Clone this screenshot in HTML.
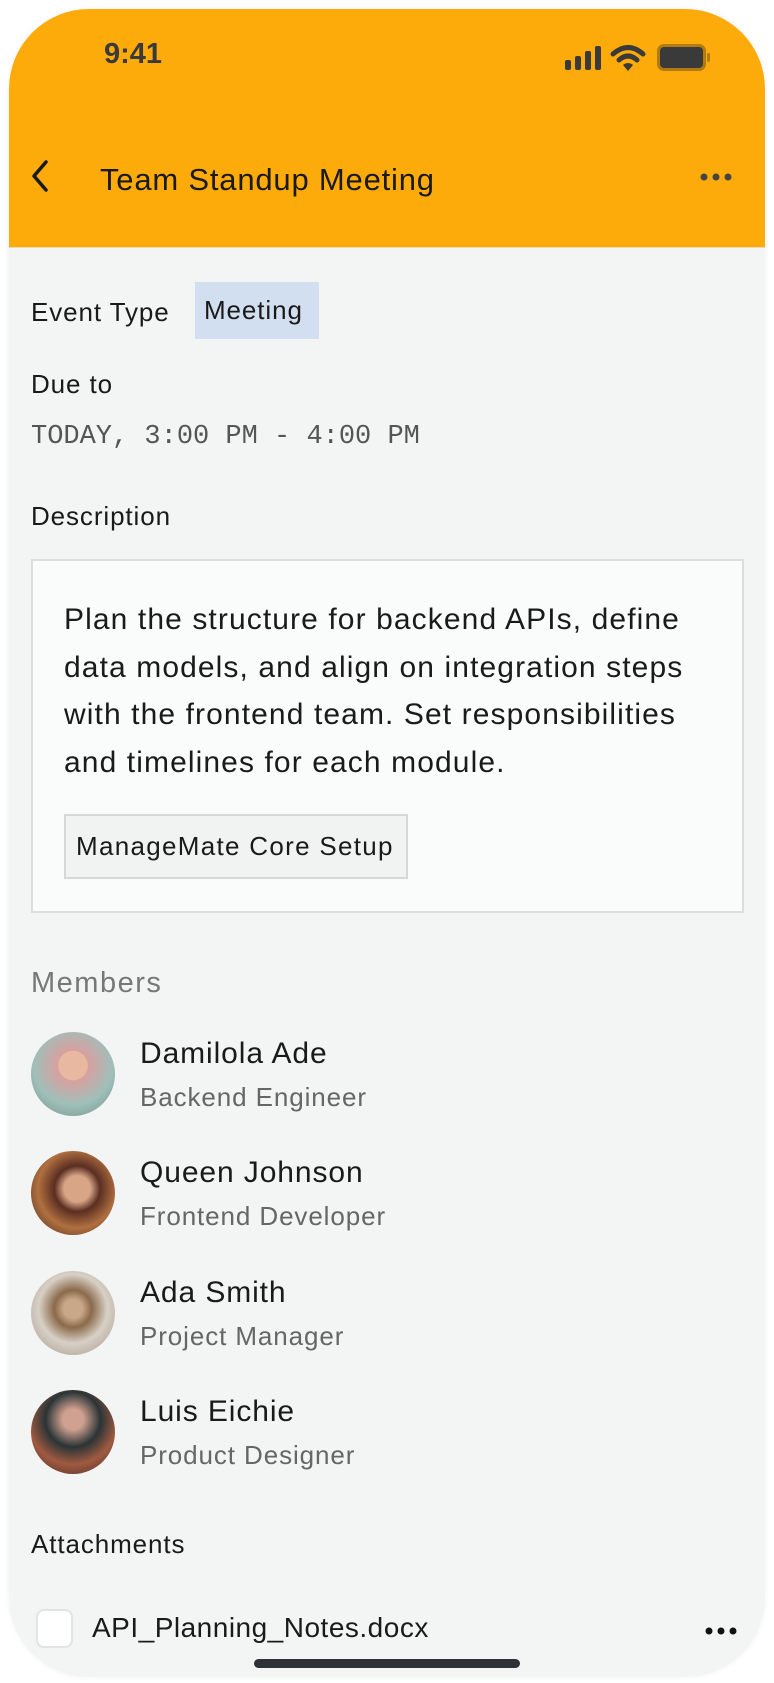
<!DOCTYPE html>
<html><head><meta charset="utf-8"><style>
*{margin:0;padding:0;box-sizing:border-box}
body{width:774px;height:1683px;background:#fff;font-family:"Liberation Sans",sans-serif;position:relative;overflow:hidden;color:#1a1a1a;letter-spacing:0.9px}
.frame{position:absolute;left:9px;top:9px;width:756px;height:1668px;border-radius:80px;background:#f3f4f4;overflow:hidden;box-shadow:0 0 6px rgba(0,0,0,.06)}
.hdr{position:absolute;left:0;top:0;width:756px;height:239px;background:#fdab0b;border-bottom:1px solid #e8d9b8}
.a{position:absolute;white-space:nowrap}
.av{position:absolute;left:22px;width:84px;height:84px;border-radius:50%}
.nm{position:absolute;left:131px;font-size:30px;color:#1a1a1a}
.rl{position:absolute;left:131px;font-size:26px;color:#666}
</style></head><body>
<div class="frame">
<div class="hdr">
<div class="a" style="left:95px;top:29px;font-size:29px;font-weight:bold;color:#3a3a3a;letter-spacing:0">9:41</div>
<svg class="a" style="left:556px;top:37px" width="40" height="24"><rect x="0" y="14" width="6" height="10" rx="2" fill="#3a3a3a"/><rect x="10" y="10" width="6" height="14" rx="2" fill="#3a3a3a"/><rect x="20" y="5" width="6" height="19" rx="2" fill="#3a3a3a"/><rect x="30" y="0" width="6" height="24" rx="2" fill="#3a3a3a"/></svg>
<svg class="a" style="left:601px;top:35px" width="36" height="28" viewBox="0 0 36 28"><path d="M3 10 Q18 -3 33 10" stroke="#3a3a3a" stroke-width="5" fill="none" stroke-linecap="round"/><path d="M9 16 Q18 8 27 16" stroke="#3a3a3a" stroke-width="5" fill="none" stroke-linecap="round"/><path d="M13 21 L18 27 L23 21 Q18 17 13 21Z" fill="#3a3a3a"/></svg>
<div class="a" style="left:648px;top:35px;width:49px;height:27px;border-radius:7px;border:3px solid #b07c10;background:#3a3a3a"></div>
<div class="a" style="left:698px;top:44px;width:3px;height:9px;background:#b07c10;border-radius:2px"></div>
<svg class="a" style="left:19px;top:149px" width="24" height="36"><path d="M18 4 L6 18 L18 32" stroke="#1a1a1a" stroke-width="3.5" fill="none" stroke-linecap="round" stroke-linejoin="round"/></svg>
<div class="a" style="left:91px;top:153px;font-size:31px;color:#1a1a1a;letter-spacing:0.8px">Team Standup Meeting</div>
<svg class="a" style="left:690px;top:163px" width="34" height="10"><circle cx="5" cy="5" r="3.5" fill="#444"/><circle cx="17" cy="5" r="3.5" fill="#444"/><circle cx="29" cy="5" r="3.5" fill="#444"/></svg>
</div>
<div class="a" style="left:22px;top:288px;font-size:26px">Event Type</div>
<div class="a" style="left:186px;top:273px;width:124px;height:57px;background:#d2dff0;font-size:26px;line-height:57px;padding-left:9px">Meeting</div>
<div class="a" style="left:22px;top:360px;font-size:26px">Due to</div>
<div class="a" style="left:22px;top:413px;font-size:27px;font-family:'Liberation Mono',monospace;color:#555;letter-spacing:0">TODAY, 3:00 PM - 4:00 PM</div>
<div class="a" style="left:22px;top:492px;font-size:26px">Description</div>
<div class="a" style="left:22px;top:550px;width:713px;height:354px;background:#fafbfb;border:2px solid #dcdede"></div>
<div class="a" style="left:55px;top:587px;font-size:30px;line-height:47.5px;color:#1a1a1a;letter-spacing:1.1px">Plan the structure for backend APIs, define<br>data models, and align on integration steps<br>with the frontend team. Set responsibilities<br>and timelines for each module.</div>
<div class="a" style="left:55px;top:805px;width:344px;height:65px;background:#f1f2f2;border:2px solid #d6d8d8;font-size:26px;line-height:61px;padding-left:10px;letter-spacing:1.3px">ManageMate Core Setup</div>
<div class="a" style="left:22px;top:958px;font-size:29px;color:#777;letter-spacing:1.5px">Members</div>

<div class="av" style="top:1023px;background:radial-gradient(circle at 50% 40%,#e8b9a0 0 22%,#d9a0a0 23%,#9fbfb9 60%,#6f8f86)"></div>
<div class="nm" style="top:1028px">Damilola Ade</div><div class="rl" style="top:1073px">Backend Engineer</div>
<div class="av" style="top:1142px;background:radial-gradient(circle at 55% 45%,#d9a587 0 20%,#5a2e22 35%,#b07040 60%,#3a2018)"></div>
<div class="nm" style="top:1147px">Queen Johnson</div><div class="rl" style="top:1192px">Frontend Developer</div>
<div class="av" style="top:1262px;background:radial-gradient(circle at 50% 45%,#c9a88a 0 15%,#8a6a4a 30%,#d8d0c6 55%,#a09080)"></div>
<div class="nm" style="top:1267px">Ada Smith</div><div class="rl" style="top:1312px">Project Manager</div>
<div class="av" style="top:1381px;background:radial-gradient(circle at 50% 35%,#d0a090 0 15%,#2a3436 40%,#a05a40 65%,#402822)"></div>
<div class="nm" style="top:1386px">Luis Eichie</div><div class="rl" style="top:1431px">Product Designer</div>

<div class="a" style="left:22px;top:1520px;font-size:26px">Attachments</div>
<div class="a" style="left:27px;top:1600px;width:37px;height:39px;border-radius:8px;background:#fff;border:2px solid #e2e4e4"></div>
<div class="a" style="left:83px;top:1603px;font-size:28px;letter-spacing:0.5px">API_Planning_Notes.docx</div>
<svg class="a" style="left:695px;top:1617px" width="34" height="10"><circle cx="5" cy="5" r="3.5" fill="#111"/><circle cx="17" cy="5" r="3.5" fill="#111"/><circle cx="29" cy="5" r="3.5" fill="#111"/></svg>
<div class="a" style="left:245px;top:1650px;width:266px;height:9px;border-radius:5px;background:#2e3136"></div>
</div>
</body></html>
